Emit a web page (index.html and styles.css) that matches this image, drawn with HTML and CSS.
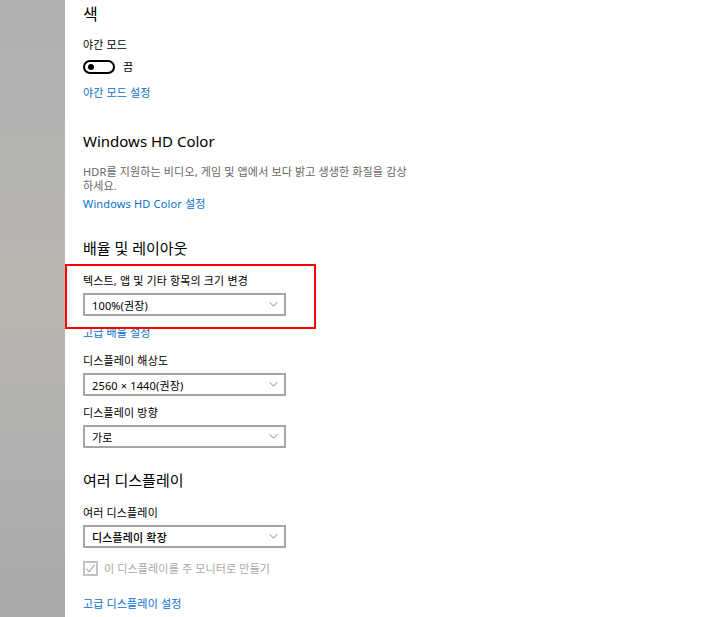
FILE: index.html
```html
<!DOCTYPE html>
<html lang="ko">
<head>
<meta charset="utf-8">
<link rel="stylesheet" href="styles.css">
</head>
<body>
<div class="page">
  <div class="strip"></div>
  <main class="content">
    <h2 class="h-small">색</h2>
    <div class="label m11">야간 모드</div>
    <div class="toggle-row">
      <span class="toggle"><span class="knob"></span></span>
      <span class="toggle-text">끔</span>
    </div>
    <a class="link m11">야간 모드 설정</a>

    <h2 class="heading m-hd">Windows HD Color</h2>
    <p class="desc">HDR를 지원하는 비디오, 게임 및 앱에서 보다 밝고 생생한 화질을 감상<br>하세요.</p>
    <a class="link m3">Windows HD Color 설정</a>

    <h2 class="heading m25">배율 및 레이아웃</h2>
    <div class="label m14">텍스트, 앱 및 기타 항목의 크기 변경</div>
    <div class="select"><span>100%(권장)</span><svg class="chev" viewBox="0 0 10 6"><path d="M0.5 0.5 L5 5 L9.5 0.5"/></svg></div>
    <a class="link m9">고급 배율 설정</a>
    <div class="label m12">디스플레이 해상도</div>
    <div class="select"><span>2560 × 1440(권장)</span><svg class="chev" viewBox="0 0 10 6"><path d="M0.5 0.5 L5 5 L9.5 0.5"/></svg></div>
    <div class="label m9">디스플레이 방향</div>
    <div class="select"><span>가로</span><svg class="chev" viewBox="0 0 10 6"><path d="M0.5 0.5 L5 5 L9.5 0.5"/></svg></div>

    <h2 class="heading m21">여러 디스플레이</h2>
    <div class="label m14">여러 디스플레이</div>
    <div class="select"><span class="strong">디스플레이 확장</span><svg class="chev" viewBox="0 0 10 6"><path d="M0.5 0.5 L5 5 L9.5 0.5"/></svg></div>
    <div class="check-row">
      <span class="checkbox"><svg viewBox="0 0 12 12"><path d="M1.5 6.5 L4.5 9.5 L10.5 2"/></svg></span>
      <span class="check-text">이 디스플레이를 주 모니터로 만들기</span>
    </div>
    <a class="link m20">고급 디스플레이 설정</a>
  </main>
  <div class="highlight"></div>
</div>
</body>
</html>
```

FILE: styles.css
```css
html, body {
  margin: 0;
  padding: 0;
  background: #ffffff;
}
body {
  font-family: "Noto Sans", "Noto Sans CJK KR", sans-serif;
  color: #000;
  overflow: hidden;
}
.page {
  position: relative;
  display: flex;
  width: 704px;
  height: 617px;
}
.strip {
  width: 65px;
  flex: none;
  background: linear-gradient(to bottom, #b0b0b0 0%, #b6b4b1 30%, #bab6b0 48%, #b2b1af 70%, #a9a9a9 100%);
}
.content {
  flex: 1;
  padding-left: 18px;
  display: flex;
  flex-direction: column;
  align-items: flex-start;
}
h2 {
  margin: 0;
  font-weight: normal;
}
.h-small {
  font-size: 16px;
  line-height: 24px;
  margin-top: 2px;
}
.heading {
  font-size: 15px;
  line-height: 22px;
}
.label {
  font-size: 11px;
  line-height: 16px;
  letter-spacing: 0.15px;
}
.link {
  font-size: 11px;
  line-height: 16px;
  color: #0a6fd0;
  cursor: pointer;
  letter-spacing: 0.15px;
}
.desc {
  margin: 13px 0 0;
  font-size: 11px;
  line-height: 14px;
  color: #666;
  white-space: nowrap;
  letter-spacing: 0.15px;
}
.toggle-row {
  display: flex;
  align-items: center;
  height: 14px;
  margin-top: 7px;
}
.toggle {
  box-sizing: border-box;
  width: 32px;
  height: 14px;
  border: 2px solid #000;
  border-radius: 7px;
  display: flex;
  align-items: center;
  padding-left: 3px;
}
.knob {
  width: 6px;
  height: 6px;
  border-radius: 50%;
  background: #000;
}
.toggle-text {
  font-size: 11px;
  margin-left: 8px;
  line-height: 14px;
}
.select {
  box-sizing: border-box;
  width: 203px;
  height: 23px;
  margin-top: 4px;
  border: 2px solid #a6a6a6;
  display: flex;
  align-items: center;
  justify-content: space-between;
  padding: 0 6px 0 7px;
  font-size: 11px;
  letter-spacing: 0.15px;
}
.strong {
  font-weight: 500;
}
.chev {
  width: 9px;
  height: 5px;
  fill: none;
  stroke: #6b6b6b;
  stroke-width: 1;
}
.check-row {
  display: flex;
  align-items: center;
  height: 16px;
  margin-top: 12px;
}
.checkbox {
  box-sizing: border-box;
  width: 15px;
  height: 15px;
  border: 2px solid #c2c2c2;
  display: flex;
  align-items: center;
  justify-content: center;
}
.checkbox svg {
  width: 11px;
  height: 11px;
  fill: none;
  stroke: #a8a8a8;
  stroke-width: 1.2;
}
.check-text {
  font-size: 11px;
  color: #a8a8a8;
  margin-left: 6px;
  letter-spacing: 0.15px;
}
.m3 { margin-top: 3px; }
.m9 { margin-top: 9px; }
.m11 { margin-top: 11px; }
.m12 { margin-top: 12px; }
.m14 { margin-top: 14px; }
.m20 { margin-top: 20px; }
.m21 { margin-top: 21px; }
.m25 { margin-top: 25px; }
.m-hd { margin-top: 29px; }
.highlight {
  position: absolute;
  left: 65px;
  top: 264px;
  width: 251px;
  height: 65px;
  box-sizing: border-box;
  border: 2px solid #ff0000;
}
```
